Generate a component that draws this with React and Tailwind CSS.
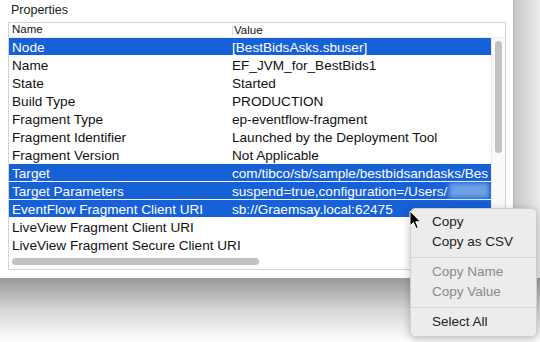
import React from "react";

const rows = [
  { n: "Node", v: "[BestBidsAsks.sbuser]", s: true },
  { n: "Name", v: "EF_JVM_for_BestBids1" },
  { n: "State", v: "Started" },
  { n: "Build Type", v: "PRODUCTION" },
  { n: "Fragment Type", v: "ep-eventflow-fragment" },
  { n: "Fragment Identifier", v: "Launched by the Deployment Tool" },
  { n: "Fragment Version", v: "Not Applicable" },
  { n: "Target", v: "com/tibco/sb/sample/bestbidsandasks/Bes", s: true },
  { n: "Target Parameters", v: "suspend=true,configuration=/Users/", s: true, blur: true },
  { n: "EventFlow Fragment Client URI", v: "sb://Graemsay.local:62475", s: true },
  { n: "LiveView Fragment Client URI", v: "" },
  { n: "LiveView Fragment Secure Client URI", v: "" },
];

function Row({ r }) {
  return (
    <div
      className={
        "flex h-[18px] shrink-0 border-b border-white pt-[3px] leading-[14px] whitespace-nowrap " +
        (r.s ? "bg-[#1660d8] text-white" : "text-[#111]")
      }
    >
      <div className="w-[223px] shrink-0 pl-[3px]">{r.n}</div>
      <div className="flex">
        <span>{r.v}</span>
        {r.blur && <span className="ml-[2px] -mt-[2px] inline-block h-[15px] w-[40px] bg-[#6d9fe4] blur-[2px]" />}
      </div>
    </div>
  );
}

export default function App() {
  return (
    <div
      className="relative w-[540px] h-[342px] overflow-hidden bg-white"
      style={{ fontFamily: '"Liberation Sans", Arial, sans-serif' }}
    >
      <div className="flex h-[278px]">
        <div className="w-[513px] shrink-0 bg-white flex flex-col pl-[8px] pr-[7px]">
          <div className="h-[22px] pl-[3px] text-[12.5px] leading-[20px] text-[#222]">Properties</div>
          <div className="h-[248px] border border-[#d4d4d4] flex flex-col overflow-hidden">
            <div className="flex h-[15px] shrink-0 items-center text-[11.5px] text-[#111] border-b border-[#ececec]">
              <div className="w-[223px] pl-[3px]">Name</div>
              <div className="h-[10px] border-l border-[#dcdcdc] pl-[1px] leading-[10px]">Value</div>
            </div>
            <div className="flex flex-1 min-h-0">
              <div className="w-[482px] shrink-0 overflow-hidden flex flex-col text-[13.6px]">
                {rows.map((r) => (
                  <Row key={r.n} r={r} />
                ))}
                <div className="flex-1 flex items-center pl-[3px]">
                  <div className="h-[7px] w-[247px] rounded-full bg-[#c2c2c2]" />
                </div>
              </div>
              <div className="flex-1 border-l border-[#ececec] bg-[#fafafa] pt-[3px] pl-[3px]">
                <div className="h-[112px] w-[7px] rounded-full bg-[#c2c2c2]" />
              </div>
            </div>
          </div>
        </div>
        <div className="flex-1 border-l border-[#b8b8b8] bg-gradient-to-r from-[#c6c6c6] to-[#ebebeb]" />
      </div>
      <div className="h-[64px] bg-gradient-to-b from-[#9a9a9a] via-[#d6d6d6] to-white" />

      <div className="absolute left-[410px] top-[208px] w-[127px] h-[129px] rounded-[5px] border border-[#cfcfcf] bg-[#ececec] shadow-[0_2px_8px_rgba(0,0,0,0.25)] pt-[3px] pb-[6px] text-[13.5px] text-[#222]">
        <div className="h-[20px] leading-[20px] pl-[21px]">Copy</div>
        <div className="h-[20px] leading-[20px] pl-[21px]">Copy as CSV</div>
        <div className="h-[10px] flex items-center">
          <div className="h-px w-full bg-[#d6d6d6]" />
        </div>
        <div className="h-[20px] leading-[20px] pl-[21px] text-[#8a8a8a]">Copy Name</div>
        <div className="h-[20px] leading-[20px] pl-[21px] text-[#8a8a8a]">Copy Value</div>
        <div className="h-[10px] flex items-center">
          <div className="h-px w-full bg-[#d6d6d6]" />
        </div>
        <div className="h-[20px] leading-[20px] pl-[21px]">Select All</div>
      </div>

      <svg className="absolute left-[409px] top-[210px]" width="13" height="20" viewBox="0 0 13 20">
        <path d="M1 1 L1 16 L4.5 12.5 L7 18.5 L9.3 17.5 L6.8 11.8 L11.5 11.8 Z" fill="#000" stroke="#fff" strokeWidth="1" strokeLinejoin="round" />
      </svg>
    </div>
  );
}
